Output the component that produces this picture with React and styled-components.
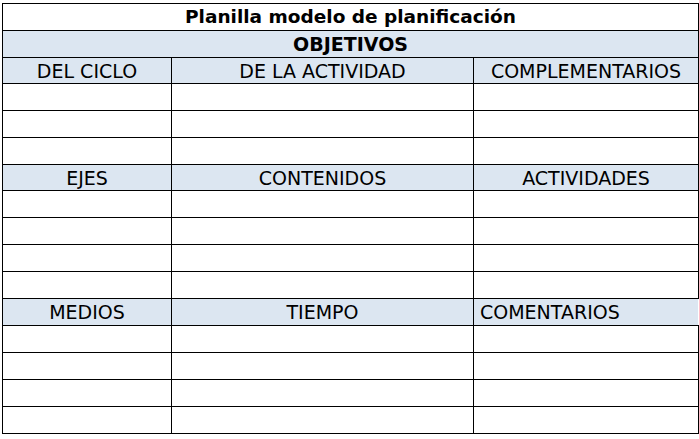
import React from "react";
import styled, { createGlobalStyle } from "styled-components";

const Global = createGlobalStyle`
  html, body { margin: 0; padding: 0; background: #ffffff; }
  body { font-family: "DejaVu Sans", Verdana, sans-serif; color: #000; }
`;

const Page = styled.div`
  padding: 3px 0 0 2px;
`;

const Sheet = styled.table`
  border-collapse: collapse;
  table-layout: fixed;
  width: 696px;
  font-family: "DejaVu Sans", Verdana, sans-serif;
`;

const Col = styled.col`
  width: ${(p) => p.$w}px;
`;

const Row = styled.tr`
  height: ${(p) => p.$h || 27}px;
`;

const Cell = styled.td`
  border: 1px solid #000;
  ${(p) => (p.$noRight ? "border-right-color: transparent;" : "")}
  background: ${(p) => (p.$shade ? "#dce6f1" : "#ffffff")};
  font-size: ${(p) => (p.$title ? "18.5px" : "19px")};
  font-weight: ${(p) => (p.$bold ? 700 : 400)};
  text-align: ${(p) => p.$align || "center"};
  padding: 0 ${(p) => (p.$align === "left" ? "6px" : "0")};
  line-height: 22px;
  white-space: nowrap;
  overflow: hidden;
  vertical-align: middle;
`;

const BlankRows = ({ count }) =>
  Array.from({ length: count }, (_, i) => (
    <Row key={i}>
      <Cell />
      <Cell />
      <Cell />
    </Row>
  ));

const HeaderRow = ({ items, lastLeft, h }) => (
  <Row $h={h}>
    {items.map((t, i) => {
      const isLast = i === items.length - 1 && lastLeft;
      return (
        <Cell key={t} $shade $align={isLast ? "left" : "center"} $noRight={isLast}>
          {t}
        </Cell>
      );
    })}
  </Row>
);

export default function App() {
  return (
    <>
      <Global />
      <Page>
        <Sheet>
          <colgroup>
            <Col $w={169} />
            <Col $w={302} />
            <Col $w={225} />
          </colgroup>
          <tbody>
            <Row>
              <Cell colSpan={3} $bold $title>
                Planilla modelo de planificación
              </Cell>
            </Row>
            <Row>
              <Cell colSpan={3} $bold $shade>
                OBJETIVOS
              </Cell>
            </Row>
            <HeaderRow h={26} items={["DEL CICLO", "DE LA ACTIVIDAD", "COMPLEMENTARIOS"]} />
            <BlankRows count={3} />
            <HeaderRow h={26} items={["EJES", "CONTENIDOS", "ACTIVIDADES"]} />
            <BlankRows count={4} />
            <HeaderRow items={["MEDIOS", "TIEMPO", "COMENTARIOS"]} lastLeft />
            <BlankRows count={4} />
          </tbody>
        </Sheet>
      </Page>
    </>
  );
}
